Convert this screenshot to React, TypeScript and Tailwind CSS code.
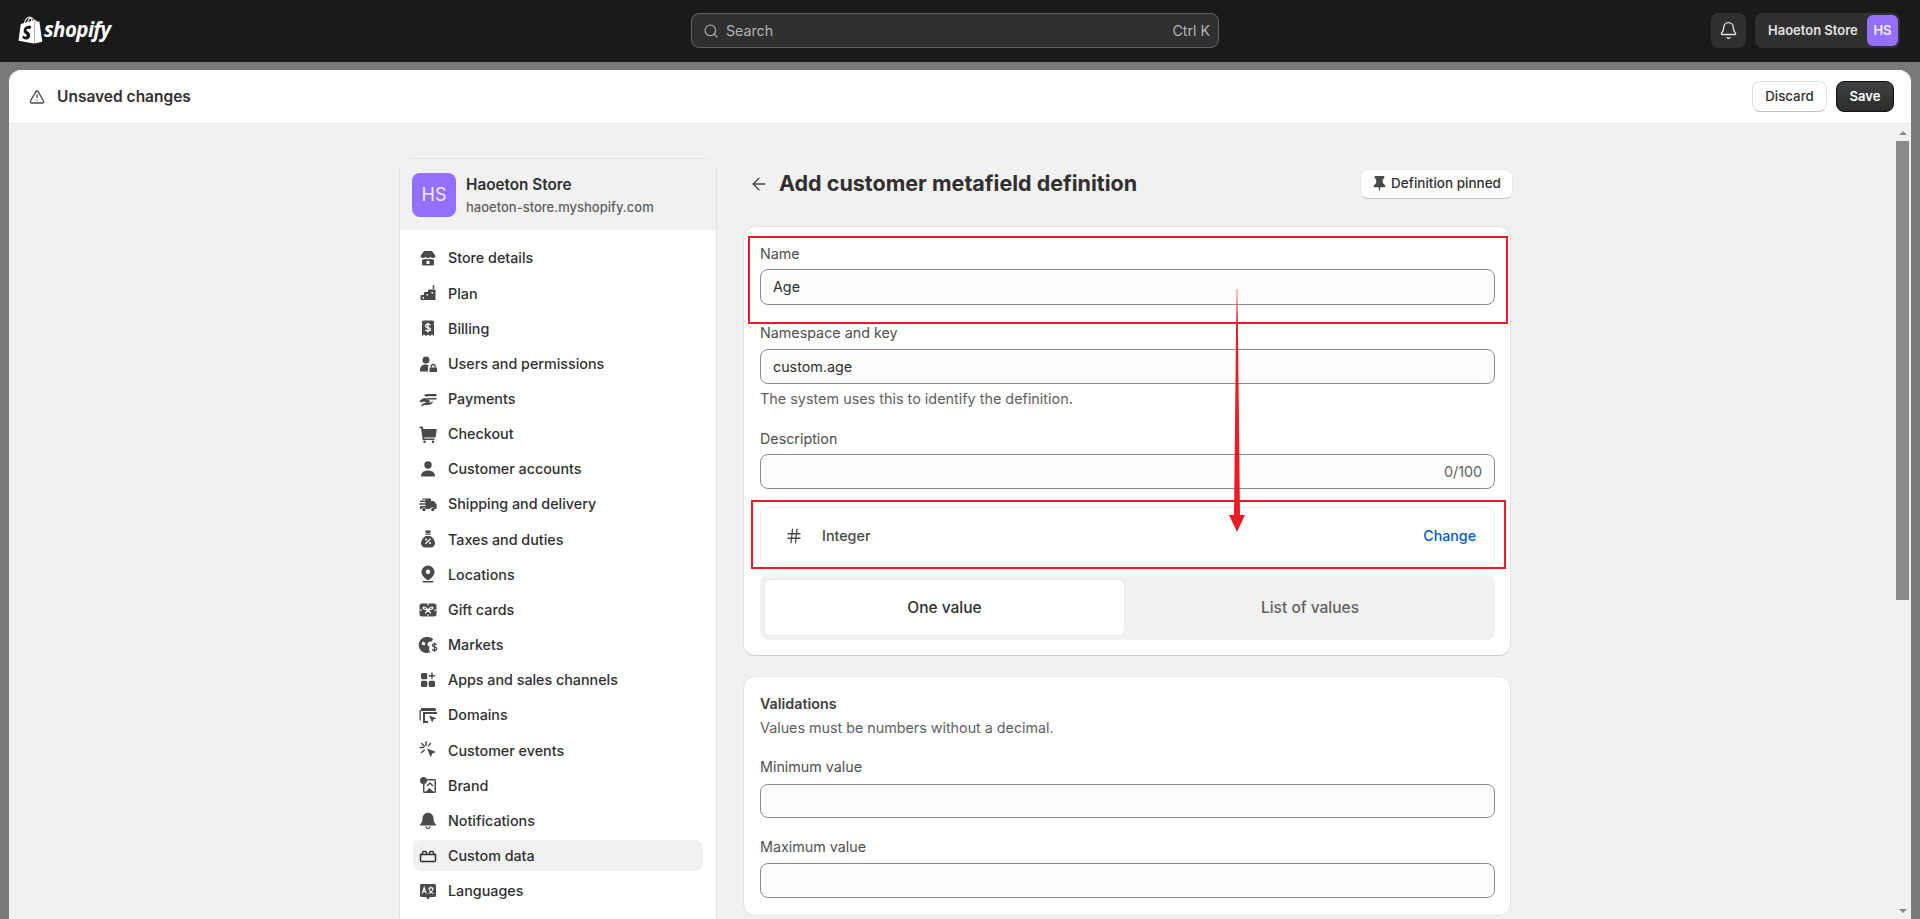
import React from 'react';
import { SiShopify } from 'react-icons/si';
import { Bell, Search, ArrowLeft, TriangleAlert, Hash } from 'lucide-react';

const W = '#ffffff';

const Ico = ({ children }: { children: React.ReactNode }) => (
  <svg viewBox="0 0 20 20" className="w-5 h-5 shrink-0" fill="#4a4a4a">{children}</svg>
);

const navItems: { label: string; icon: React.ReactNode; active?: boolean }[] = [
  { label: 'Store details', icon: <Ico><path d="M6 3h8l3.500 5a2.200 2.200 0 0 1-2.500 2 2.600 2.600 0 0 1-2.500-1.200A2.800 2.800 0 0 1 10 10a2.800 2.800 0 0 1-2.500-1.200A2.600 2.600 0 0 1 5 10a2.200 2.200 0 0 1-2.500-2z"/><path d="M4 11.200c1.200.4 2.600.2 3.500-.5.800.6 1.600.8 2.500.8s1.700-.2 2.500-.8c.9.7 2.300.9 3.500.5V16a1.500 1.500 0 0 1-1.500 1.500H5.500A1.500 1.500 0 0 1 4 16z"/><rect x="8.500" y="13" width="3" height="3" fill={W}/></Ico> },
  { label: 'Plan', icon: <Ico><path d="M14 2.500h3l-1.500 2z"/><path d="M14.800 4h1.400v2h-1.400z"/><path d="M12.500 6.500h5v10.500h-14a1 1 0 0 1-1-1v-3a1 1 0 0 1 1-1h2.500v-2a1 1 0 0 1 1-1h3v-1.500a1 1 0 0 1 1-1z"/><rect x="4.500" y="14" width="1.500" height="1.500" fill={W}/><rect x="8.500" y="11" width="1.500" height="1.500" fill={W}/><rect x="13.500" y="9" width="1.500" height="1.500" fill={W}/></Ico> },
  { label: 'Billing', icon: <Ico><path d="M5.500 2.500h9a1.500 1.500 0 0 1 1.500 1.500v14l-2-1.500-2 1.500-2-1.500-2 1.500-2-1.500-2 1.500V4a1.500 1.500 0 0 1 1.500-1.500z"/><path d="M12.500 7.300c-.4-.8-1.300-1.200-2.500-1.200-1.400 0-2.400.7-2.400 1.800 0 2.300 4.900 1 4.900 3.300 0 1.100-1 1.800-2.500 1.800-1.300 0-2.200-.5-2.600-1.300M10 4.800v9.400" fill="none" stroke={W} strokeWidth="1.300"/></Ico> },
  { label: 'Users and permissions', icon: <Ico><circle cx="8" cy="6" r="3.500"/><path d="M2 16c0-3.500 2.500-5.500 6-5.500 1 0 2 .2 2.700.5-.5.600-.7 1.300-.7 2v4.500H3a1 1 0 0 1-1-1.500z"/><path d="M12 13.500h6.500a.5.500 0 0 1 .5.500v3.500a.5.500 0 0 1-.5.500H12a.5.500 0 0 1-.5-.5V14a.5.500 0 0 1 .5-.5z"/><path d="M13.200 13.500v-1a2 2 0 0 1 4 0v1" fill="none" stroke="#4a4a4a" strokeWidth="1.300"/></Ico> },
  { label: 'Payments', icon: <Ico><path d="M6 6.500c1-1.200 2-1.500 3-1.500h9.500v2.200H10c-.8 0-1.500.2-2 .6z"/><path d="M8 9h10.500v1.500H9.500z"/><path d="M1.500 12c1.500-1.500 3.500-3 5.500-3l4.500 2.500c.8.500.5 1.800-.5 1.800H8.500l3 .2c1 0 3-.8 4-1.300-1 2.300-3 3.800-5.500 3.800H6l-2 1.500-1-1.200 3-2.200H8.500l-2-1.500-3.500 1z"/></Ico> },
  { label: 'Checkout', icon: <Ico><path d="M1.500 2.500h2.500a1 1 0 0 1 1 .8L5.300 5H18a.7.700 0 0 1 .7.800l-1 7a1 1 0 0 1-1 .8H6.200l.2 1h10.100v1.400H5.300a.7.700 0 0 1-.7-.6L3 4H1.500z"/><circle cx="6.500" cy="17.700" r="1.300"/><circle cx="15" cy="17.700" r="1.300"/></Ico> },
  { label: 'Customer accounts', icon: <Ico><circle cx="10" cy="6" r="3.700"/><path d="M3.500 17.500c-.3 0-.5-.2-.5-.5 0-3.300 3-5.500 7-5.500s7 2.200 7 5.500c0 .3-.2.500-.5.500z"/></Ico> },
  { label: 'Shipping and delivery', icon: <Ico><path d="M4 4.500h8a1 1 0 0 1 1 1V7h2.500a1 1 0 0 1 .8.400l2.200 3a1 1 0 0 1 .2.600v3a1 1 0 0 1-1 1h-1.200a2.500 2.500 0 0 0-4.800 0H8.300a2.500 2.500 0 0 0-4.800 0H2v-3h5.500v-1.300H1.500V9.200H7.500V8H2V6.500h5.500V5.500H4z"/><circle cx="6" cy="15.500" r="1.700"/><circle cx="14.800" cy="15.500" r="1.700"/></Ico> },
  { label: 'Taxes and duties', icon: <Ico><path d="M7 1.500h6l-1 2.500H8z"/><rect x="7.500" y="4.500" width="5" height="1.300"/><path d="M7.500 7h5c2.500 2 4.500 4.500 4.500 7a4.500 4.500 0 0 1-4.500 4.500h-5A4.500 4.500 0 0 1 3 14c0-2.500 2-5 4.500-7z"/><path d="M7.500 14.700l5-5" stroke={W} strokeWidth="1.300"/><circle cx="8" cy="10.500" r="1" fill={W}/><circle cx="12" cy="14" r="1" fill={W}/></Ico> },
  { label: 'Locations', icon: <Ico><path d="M10 1.500a6.500 6.500 0 0 1 6.500 6.500c0 3.300-3.500 6.800-6.500 8.300C7 14.800 3.500 11.300 3.500 8A6.500 6.500 0 0 1 10 1.500z"/><circle cx="10" cy="7.800" r="2.200" fill={W}/><rect x="4.500" y="17" width="11" height="1.500" rx=".7"/></Ico> },
  { label: 'Gift cards', icon: <Ico><rect x="1.500" y="3.500" width="17" height="13" rx="2.500"/><path d="M10 10c-1.700-2.800-4.500-3.700-4.900-2.400-.4 1.300 2.200 2.400 4.900 2.400zm0 0c1.700-2.800 4.500-3.700 4.900-2.400.4 1.300-2.200 2.400-4.900 2.400zM10 10l-2.800 3.300M10 10l2.800 3.300M1.500 10h2.500M16 10h2.500M10 3.500v2M10 14.500v2" fill="none" stroke={W} strokeWidth="1.200"/></Ico> },
  { label: 'Markets', icon: <Ico><path d="M10 2a8 8 0 0 1 5.200 1.900L13.500 6.500l-3 .5-1.500 3 2.500 1.500-.5 2.500 1 3.200A8 8 0 1 1 10 2z"/><path d="M4.500 6.500l3 1.500-1 2.500-3-1z" fill={W}/><path d="M18.600 10c-.4-.8-1.200-1.200-2.100-1.200-1.200 0-2.100.6-2.100 1.600 0 2 4.400 1 4.400 3.200 0 1-.9 1.700-2.300 1.700-1 0-1.900-.4-2.300-1.200M16.500 7.500v9.500" fill="none" stroke="#4a4a4a" strokeWidth="1.300"/></Ico> },
  { label: 'Apps and sales channels', icon: <Ico><rect x="3" y="3" width="6.300" height="6.300" rx="1.500"/><rect x="3" y="10.700" width="6.300" height="6.300" rx="1.500"/><rect x="10.700" y="10.700" width="6.300" height="6.300" rx="1.500"/><path d="M13.200 2.500h1.500v2.400h2.400v1.500h-2.400v2.400h-1.500V6.400h-2.400V4.900h2.400z"/></Ico> },
  { label: 'Domains', icon: <Ico><path d="M3 3h13.500a1.500 1.500 0 0 1 1.500 1.500V6H3z"/><path d="M1.500 5h1.300v10.500H1.500z"/><path d="M5 7h14v2H5zM5 9h2v9H5zM7 16h3v2H7z"/><path d="M11 10.500l7.500 2.700-3 1.300-1.300 3z"/></Ico> },
  { label: 'Customer events', icon: <Ico><path d="M9 8.500l9 3.500-3.800 1.500-1.500 3.800z"/><path d="M8 1.800v3.700M2 7.500h3.700M3.700 3.500l2.500 2.500M3.500 12.500l2.700-2.300M12.500 3.400l-2 2.500" fill="none" stroke="#4a4a4a" strokeWidth="1.500" strokeLinecap="round"/></Ico> },
  { label: 'Brand', icon: <Ico><path d="M6 4h10.500A1.500 1.500 0 0 1 18 5.500v11a1.500 1.500 0 0 1-1.500 1.500h-10A1.500 1.500 0 0 1 5 16.500V9h1.500v7.500h1.700l3-3.500 4 3.500h1.300v-11H9V4z"/><circle cx="5.500" cy="5.500" r="3.500"/><path d="M9 11l3-3 3 3" fill="none" stroke="#4a4a4a" strokeWidth="1.500"/></Ico> },
  { label: 'Notifications', icon: <Ico><path d="M10 1.800c3.200 0 5.500 2.500 5.500 5.700 0 3 1 4.500 2.300 5.800.5.500.2 1.200-.5 1.200H2.700c-.7 0-1-.7-.5-1.200C3.500 12 4.500 10.500 4.500 7.500c0-3.200 2.300-5.700 5.500-5.700z"/><path d="M7.500 15.500h5a2.500 2.500 0 0 1-5 0z"/><circle cx="10" cy="16" r="1" fill={W}/></Ico> },
  { label: 'Custom data', active: true, icon: <Ico><path d="M2.500 8.500h15v6a1 1 0 0 1-1 1h-13a1 1 0 0 1-1-1zM4.500 8.500V6.500a1 1 0 0 1 1-1h2a1 1 0 0 1 1 1v2M11.500 8.500V6.500a1 1 0 0 1 1-1h2a1 1 0 0 1 1 1v2" fill="none" stroke="#303030" strokeWidth="1.500"/></Ico> },
  { label: 'Languages', icon: <Ico><path d="M3.500 3h13A1.500 1.500 0 0 1 18 4.500v10a1.500 1.500 0 0 1-1.500 1.500H12l-2 2.500L8 16H3.500A1.500 1.500 0 0 1 2 14.500v-10A1.500 1.500 0 0 1 3.500 3z"/><path d="M4.200 12.500l2-6 2 6M5 10.500h2.500M10.500 7h5M13 5.500V7M11 7.500c.5 2.500 2 4.300 4.500 5M15 7.500c-.5 2.500-2 4.300-4.500 5" fill="none" stroke={W} strokeWidth="1.100"/></Ico> },
];

const labelCls = 'text-[14.3px] leading-5 text-[#4f4f4f] font-normal';
const inputCls = 'flex items-center rounded-lg border border-[#8a8a8a] bg-[#fdfdfd] px-[12px] text-[14.3px] text-[#303030] font-normal';

export default function App() {
  return (
    <div className="h-screen w-full overflow-hidden flex flex-col bg-[#7a7a7a] font-['Inter','Liberation_Sans',sans-serif]">
      {/* top bar */}
      <div className="h-[62px] shrink-0 bg-[#1a1a1a] flex items-center pb-[1px]">
        <div className="flex items-center pl-[17px] w-[691px] shrink-0">
          <SiShopify className="text-white w-[27px] h-[28px] -mt-[1px]" />
          <span className="text-white text-[20.500px] font-bold italic tracking-[-0.6px] font-['Open_Sans',sans-serif] leading-none -mt-[2px]">shopify</span>
        </div>
        <div className="w-[528px] h-[35px] shrink-0 rounded-lg border border-[#616161] bg-[#303030] flex items-center pl-[11px] pr-[8px] text-[14.2px] text-[#b5b5b5] font-normal">
          <Search className="w-[16px] h-[16px] text-[#b5b5b5]" strokeWidth={1.6} />
          <span className="ml-[7px]">Search</span>
          <span className="ml-auto">Ctrl K</span>
        </div>
        <div className="ml-auto flex items-center pr-[20px]">
          <div className="w-[35px] h-[35px] rounded-lg bg-[#303030] flex items-center justify-center">
            <Bell className="w-[19px] h-[19px] text-[#e3e3e3]" strokeWidth={1.7} />
          </div>
          <div className="ml-[9px] w-[145px] h-[35px] rounded-lg bg-[#303030] flex items-center pl-[13px] pr-[2px]">
            <span className="text-[13px] font-semibold text-[#e3e3e3] whitespace-nowrap">Haoeton Store</span>
            <div className="ml-auto w-[31px] h-[31px] rounded-md bg-[#9370ff] text-[#f1ecff] text-[13px] font-semibold flex items-center justify-center">HS</div>
          </div>
        </div>
      </div>

      {/* panel */}
      <div className="flex-1 min-h-0 mt-[8px] mx-[9px] rounded-t-xl overflow-hidden bg-[#f1f1f1] flex flex-col">
        <div className="h-[54px] shrink-0 bg-white border-b border-[#e8e8e8] flex items-center pl-[20px] pr-[17px]">
          <TriangleAlert className="w-[16px] h-[16px] text-[#4a4a4a]" strokeWidth={2} />
          <span className="ml-[12px] text-[15.500px] font-semibold text-[#303030]">Unsaved changes</span>
          <div className="ml-auto flex items-center gap-[9px]">
            <button className="w-[75px] h-[31px] rounded-lg bg-white border border-[#e3e3e3] border-b-[#c4c4c4] text-[13.300px] font-[450] text-[#303030]">Discard</button>
            <button className="w-[58px] h-[31px] rounded-lg bg-gradient-to-b from-[#404040] to-[#2c2c2c] border border-[#111111] text-[13px] font-semibold text-white">Save</button>
          </div>
        </div>

        <div className="flex-1 min-h-0 flex overflow-hidden">
          <div className="flex-1 min-w-0 overflow-hidden pl-[390px] pt-[34px] flex items-start gap-[26px]">
            {/* sidebar */}
            <div className="w-[318px] shrink-0 rounded-xl border border-[#e3e3e3] overflow-hidden bg-white">
              <div className="h-[71px] bg-[#f1f1f1] flex items-center pl-[12px]">
                <div className="w-[44px] h-[44px] rounded-lg bg-[#9370ff] text-[#f1ecff] text-[18px] flex items-center justify-center">HS</div>
                <div className="ml-[10px] pt-[3px]">
                  <div className="text-[15.300px] font-semibold text-[#303030] leading-[22px]">Haoeton Store</div>
                  <div className="text-[13px] text-[#616161] leading-[22px] font-[450]">haoeton-store.myshopify.com</div>
                </div>
              </div>
              <div className="px-[13px] pt-[12.5px] pb-[40px] flex flex-col gap-[4px]">
                {navItems.map((it) => (
                  <div key={it.label} className={`h-[31.17px] flex items-center gap-[10px] pl-[5px] rounded-lg text-[14.3px] font-[450] text-[#303030] ${it.active ? 'bg-[#f1f1f1]' : ''}`}>
                    {it.icon}
                    <span>{it.label}</span>
                  </div>
                ))}
              </div>
            </div>

            {/* main */}
            <div className="w-[768px] shrink-0">
              <div className="h-[33px] mt-[9px] mb-[26px] flex items-center">
                <ArrowLeft className="ml-[6px] w-[20px] h-[20px] text-[#4a4a4a]" strokeWidth={1.6} />
                <h1 className="ml-[10px] text-[21.500px] font-bold text-[#303030] whitespace-nowrap">Add customer metafield definition</h1>
                <button className="ml-auto -mr-[2px] w-[153px] h-[30px] rounded-lg bg-white border border-[#e8e8e8] border-b-[#c4c4c4] flex items-center justify-center gap-[2px] text-[13.500px] font-[450] text-[#303030]">
                  <svg viewBox="0 0 20 20" className="w-[19px] h-[19px] -ml-[2px]" fill="#4a4a4a"><path d="M5 2h10v2.500l-1.500 1v4l2.500 2.500v2h-5L10 19l-1-5H4v-2l2.500-2.500v-4L5 4.500z"/></svg>
                  <span>Definition pinned</span>
                </button>
              </div>

              <div className="relative rounded-xl bg-white border border-[#e3e3e3] border-b-[#cfcfcf] pl-[16px] pr-[15px] pt-[17px] pb-[15px]">
                <div className={labelCls}>Name</div>
                <div className={`${inputCls} mt-[5px] h-[36px]`}>Age</div>
                <div className={`${labelCls} mt-[18px]`}>Namespace and key</div>
                <div className={`${inputCls} mt-[6px] h-[35px]`}>custom.age</div>
                <div className="mt-[5px] text-[14.4px] leading-5 text-[#616161] font-normal">The system uses this to identify the definition.</div>
                <div className={`${labelCls} mt-[20px]`}>Description</div>
                <div className={`${inputCls} mt-[5px] h-[35px] justify-end text-[#616161]`}>0/100</div>
                <div className="mt-[17.500px] h-[59px] rounded-lg border border-[#ebebeb] flex items-center pl-[24px] pr-[18px]">
                  <Hash className="w-[18px] h-[18px] text-[#4a4a4a]" strokeWidth={1.7} />
                  <span className="ml-[19px] text-[14.3px] font-medium text-[#4a4a4a]">Integer</span>
                  <span className="ml-auto text-[14.2px] font-medium text-[#005bd3]">Change</span>
                </div>
                <div className="mt-[9.500px] h-[65px] rounded-lg bg-[#f1f1f1] pl-[4px] py-[4px] flex">
                  <div className="w-[361px] rounded-md bg-white border border-[#e8e8e8] flex items-center justify-center text-[15.500px] font-medium text-[#303030]">One value</div>
                  <div className="flex-1 flex items-center justify-center text-[15.500px] font-medium text-[#616161]">List of values</div>
                </div>

                {/* annotation boxes */}
                <div className="absolute left-[4px] top-[9px] w-[760px] h-[88px] border-2 border-[#ed1c24]" />
                <div className="absolute left-[7px] top-[273px] w-[755px] h-[69px] border-2 border-[#ed1c24]" />
                <svg className="absolute left-[481px] top-[62px] w-[24px] h-[246px]" viewBox="0 0 24 246" fill="none">
                  <defs>
                    <linearGradient id="arrowFade" x1="0" y1="0" x2="0" y2="1">
                      <stop offset="0" stopColor="#f58a90" />
                      <stop offset="0.15" stopColor="#ed1c24" />
                      <stop offset="1" stopColor="#ed1c24" />
                    </linearGradient>
                  </defs>
                  <path d="M11.500 0h1L15 226H20L12 243 4 226H9z" fill="url(#arrowFade)" />
                </svg>
              </div>

              <div className="mt-[20px] rounded-xl bg-white border border-[#e3e3e3] pl-[16px] pr-[15px] pt-[17px] pb-[17px]">
                <div className="text-[14.3px] leading-5 font-semibold text-[#404040]">Validations</div>
                <div className="mt-[4px] text-[14.3px] leading-5 text-[#616161] font-normal">Values must be numbers without a decimal.</div>
                <div className={`${labelCls} mt-[19px]`}>Minimum value</div>
                <div className={`${inputCls} mt-[7px] h-[34px]`} />
                <div className={`${labelCls} mt-[19px]`}>Maximum value</div>
                <div className={`${inputCls} mt-[6px] h-[35px]`} />
              </div>
            </div>
          </div>

          {/* scrollbar */}
          <div className="w-[15px] shrink-0 flex flex-col items-center pr-[2px] pt-[7px] pb-[6px]">
            <div className="w-0 h-0 border-x-[4px] border-x-transparent border-b-[4px] border-b-[#8b8b8b]" />
            <div className="mt-[6px] w-[13px] h-[459px] bg-[#8b8b8b]" />
            <div className="mt-auto w-0 h-0 border-x-[4px] border-x-transparent border-t-[4px] border-t-[#8b8b8b]" />
          </div>
        </div>
      </div>
    </div>
  );
}
